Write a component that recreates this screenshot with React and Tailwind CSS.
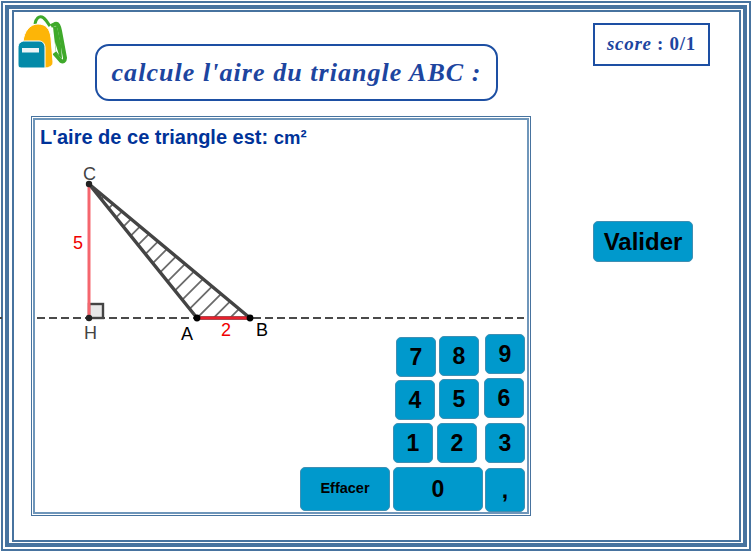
import React from 'react';

function Backpack() {
  return (
    <svg width="50" height="54" viewBox="0 0 50 54" className="block">
      {/* straps */}
      <path d="M17 9 C18 3 21 1 24 2 C27 3 29 7 32 11" fill="none" stroke="#3fa92b" strokeWidth="3" />
      <path d="M33 11 L37 9 C40 8 41 11 42 16 L47 43 C47 46 45 47 43 46 L36 38" fill="none" stroke="#3fa92b" strokeWidth="4" />
      <path d="M35 12 L39 11 L43 30 L44 44 L38 38 Z" fill="#3fa92b" />
      <path d="M37 27 L38 36 L41 40 Z" fill="#fff" />
      {/* body */}
      <path d="M5 27 C6 16 12 9 20 9 C28 9 32 14 33 23 L35 47 C35 51 31 53 26 53 L5 53 Z" fill="#fdb507" stroke="#fff" strokeWidth="1" />
      {/* pocket */}
      <path d="M0 33 C0 28 3 26 7 26 L21 26 C25 26 27 29 27 33 L27 53 L5 53 C1 53 0 52 0 49 Z" fill="#048aa8" stroke="#fff" strokeWidth="1" />
      <rect x="4" y="33" width="17" height="4.5" fill="#eef5f7" />
    </svg>
  );
}

function Key({ label, className = '' }) {
  return (
    <div className={`flex shrink-0 items-center justify-center rounded-[5px] border border-[#3f8fb3] bg-[#0099cc] font-bold text-black ${className}`}>
      {label}
    </div>
  );
}

function Figure() {
  return (
    <svg width="490" height="185" viewBox="0 0 490 185" className="block overflow-visible" style={{ fontFamily: '"Liberation Sans", sans-serif' }}>
      <defs>
        <clipPath id="tri">
          <path d="M54 35 L162 169 L215 169 Z" />
        </clipPath>
      </defs>
      {/* hatch */}
      <g clipPath="url(#tri)" stroke="#6a6a6a" strokeWidth="1.8">
        {Array.from({ length: 16 }).map((_, i) => {
          const s = 364 - i * 16.5;
          return <line key={i} x1={s} y1={0} x2={0} y2={s} />;
        })}
      </g>
      {/* dashed axis */}
      <line x1="2" y1="169" x2="489" y2="169" stroke="#4a4a4a" strokeWidth="2" strokeDasharray="8 4" />
      {/* right angle */}
      <rect x="54" y="155" width="14" height="14" fill="#e8e8e8" stroke="#444" strokeWidth="2.4" />
      {/* sides */}
      <line x1="54" y1="35" x2="54" y2="169" stroke="#f5666e" strokeWidth="3" />
      <path d="M54 35 L162 169 L215 169 Z" fill="none" stroke="#444" strokeWidth="3.4" strokeLinejoin="round" />
      <line x1="162" y1="169" x2="215" y2="169" stroke="#e8202c" strokeWidth="3" />
      {/* points */}
      <circle cx="54" cy="35" r="3.2" fill="#222" />
      <circle cx="54" cy="169" r="3.2" fill="#222" />
      <circle cx="162" cy="169" r="3.4" fill="#000" />
      <circle cx="215" cy="169" r="3.4" fill="#000" />
      {/* labels */}
      <text x="48" y="31" fontSize="18" fill="#444">C</text>
      <text x="49" y="190" fontSize="18" fill="#444">H</text>
      <text x="146" y="191" fontSize="18" fill="#000">A</text>
      <text x="221" y="187" fontSize="18" fill="#000">B</text>
      <text x="38" y="100" fontSize="18" fill="#f00000">5</text>
      <text x="186" y="187" fontSize="18" fill="#f00000">2</text>
    </svg>
  );
}

function Keypad() {
  return (
    <div className="flex flex-col text-[23px]">
      <div className="flex h-[44px] items-start">
        <Key label="7" className="ml-[361px] mt-[3px] h-[40px] w-[40px]" />
        <Key label="8" className="ml-[3px] mt-[2px] h-[40px] w-[40px]" />
        <Key label="9" className="ml-[6px] h-[40px] w-[40px]" />
      </div>
      <div className="flex h-[45px] items-start">
        <Key label="4" className="ml-[360px] mt-[2px] h-[40px] w-[40px]" />
        <Key label="5" className="ml-[4px] mt-[1px] h-[40px] w-[40px]" />
        <Key label="6" className="ml-[5px] h-[40px] w-[40px]" />
      </div>
      <div className="flex h-[44px] items-start">
        <Key label="1" className="ml-[358px] h-[40px] w-[40px]" />
        <Key label="2" className="ml-[4px] h-[40px] w-[40px]" />
        <Key label="3" className="ml-[8px] h-[40px] w-[40px]" />
      </div>
      <div className="flex items-start">
        <Key label="Effacer" className="ml-[265px] h-[44px] w-[90px] text-[14.5px]" />
        <Key label="0" className="ml-[3px] h-[44px] w-[90px]" />
        <Key label="," className="ml-[2px] mt-[1px] h-[44px] w-[40px]" />
      </div>
    </div>
  );
}

export default function App() {
  return (
    <div className="relative h-[552px] w-[752px] overflow-hidden bg-white" style={{ fontFamily: '"Liberation Sans", sans-serif' }}>
      <div className="absolute left-0 top-[317px] h-[2px] w-[2px] bg-[#444]" />
      <div className="p-[1px]">
        <div className="h-[550px] border-[2px] border-[#47739f] p-[2px]">
          <div className="h-[542px] border-[4px] border-[#47739f] pb-[1px] pl-[3px] pr-[2px] pt-[1px]">
            <div className="h-[532px] border-[2px] border-[#47739f]">
              <div className="flex items-start">
                <div className="ml-[4px] mt-[3px]"><Backpack /></div>
                <div className="ml-[27px] mt-[32px] flex h-[57px] w-[403px] items-center justify-center rounded-[14px] border-2 border-[#1d4fa3] text-[26px] font-bold italic tracking-[1.05px] text-[#1d459f]" style={{ fontFamily: '"Liberation Serif", serif' }}>
                  calcule l'aire du triangle ABC :
                </div>
                <div className="ml-[95px] mt-[11px] flex h-[43px] w-[117px] items-center justify-center border-2 border-[#1d4fa3] text-[19px] font-bold tracking-[0.7px] text-[#1d459f]" style={{ fontFamily: '"Liberation Serif", serif' }}>
                  <span className="italic">score</span>&nbsp;: 0/1
                </div>
              </div>
              <div className="mt-[15px] flex items-start">
                <div className="ml-[17px] h-[400px] w-[500px] shrink-0 border border-[#47739f] p-[1px]">
                  <div className="h-[396px] border-2 border-[#6f96ba]">
                    <div className="pl-[5px] pt-[6px] text-[20px] font-bold leading-[22px] text-[#003399]">
                      L'aire de ce triangle est: <span className="text-[18.5px]">cm²</span>
                    </div>
                    <Figure />
                    <Keypad />
                  </div>
                </div>
                <Key label="Valider" className="ml-[62px] mt-[105px] h-[41px] w-[100px] text-[24px]" />
              </div>
            </div>
          </div>
        </div>
      </div>
    </div>
  );
}
